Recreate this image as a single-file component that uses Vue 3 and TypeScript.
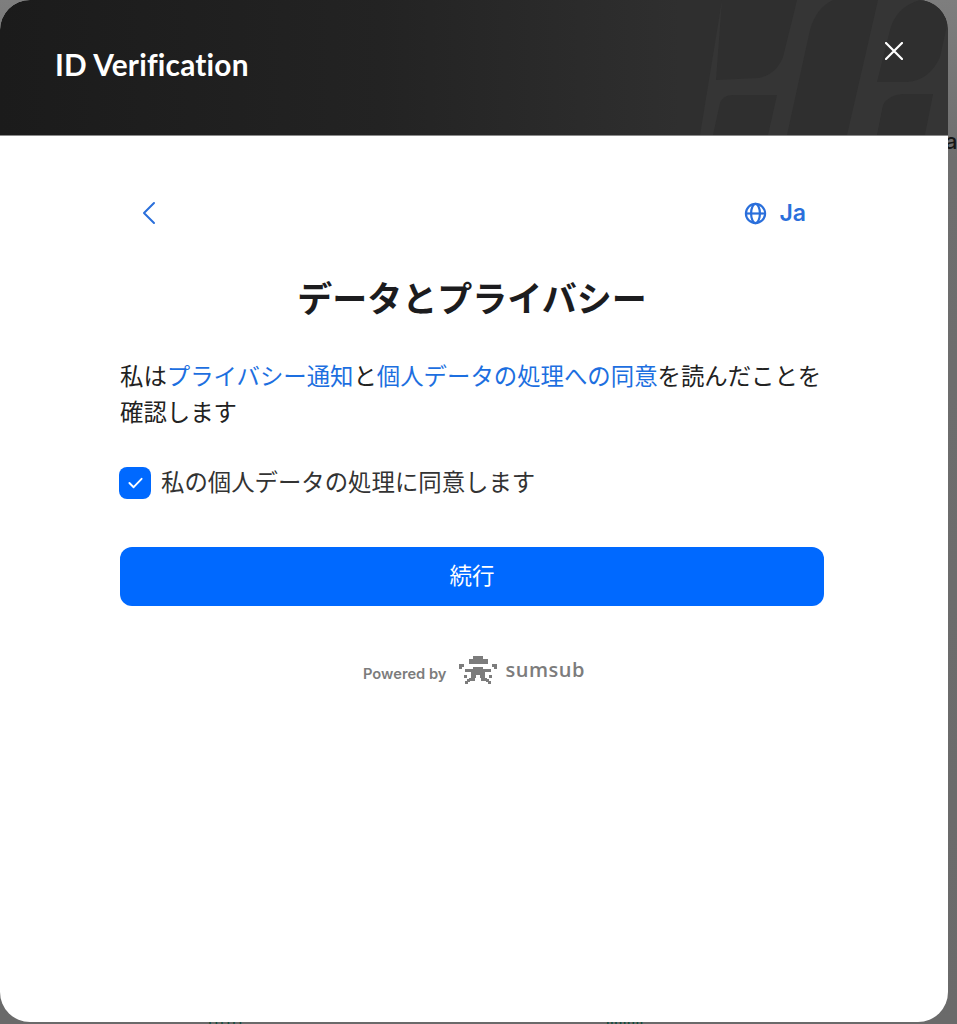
<script setup lang="ts">
const logoPixels: [number, number, number, number][] = [
  [14, 0, 10, 3], [10, 3, 19, 5],
  [0, 8, 5, 3], [0, 11, 3, 2], [33, 8, 5, 3], [35, 11, 3, 2],
  [6, 13, 8, 3], [24, 13, 8, 3],
  [14, 11, 10, 4], [12, 15, 14, 4],
  [12, 19, 5, 3], [21, 19, 5, 3], [10, 22, 6, 3], [22, 22, 6, 3],
  [5, 19, 3, 3], [8, 23, 3, 3], [27, 23, 3, 3], [30, 19, 3, 3], [6, 25, 3, 3], [29, 25, 3, 3],
]
</script>

<template>
  <div class="page">
    <span class="bg-text side">a</span>
    <span class="bg-text foot-a">ԱԱԱ</span>
    <span class="bg-text foot-b">шшш</span>
    <div class="modal">
      <header class="header">
        <svg class="pattern" viewBox="0 0 260 135" width="260" height="135" aria-hidden="true">
          <path d="M12 135 L34 0 H260 V135 Z" fill="#353535" />
          <g fill="#2f2f2f">
            <path d="M34 0 H109 L95 57 Q88 75 70 78 L28 80 Z" />
            <path d="M25 135 L32 103 Q35 95 45 95 H89 L80 135 Z" />
            <path d="M145 0 H190 L159 135 H99 L122 30 Q128 8 145 0 Z" />
            <path d="M232 0 H242 Q259 10 259 25 L252 57 Q242 80 219 82 H189 L202 30 Q208 7 232 0 Z" />
            <path d="M189 135 L195 105 Q200 95 215 94 H245 L237 135 Z" />
          </g>
        </svg>
        <h1 class="header-title">ID Verification</h1>
        <button class="close" aria-label="Close">
          <svg viewBox="0 0 18 18" width="18" height="18">
            <path d="M1 1 L17 17 M17 1 L1 17" stroke="#fff" stroke-width="2.2" stroke-linecap="round" />
          </svg>
        </button>
      </header>

      <main class="content">
        <div class="toolbar">
          <button class="back" aria-label="Back">
            <svg viewBox="0 0 14 24" width="14" height="24">
              <path d="M12 2 L2 12 L12 22" fill="none" stroke="#2a6fdb" stroke-width="2" stroke-linecap="round" stroke-linejoin="round" />
            </svg>
          </button>
          <div class="lang">
            <svg viewBox="0 0 24 24" width="23" height="23">
              <g fill="none" stroke="#2a6fdb" stroke-width="2.3">
                <circle cx="12" cy="12" r="10" />
                <ellipse cx="12" cy="12" rx="4.6" ry="10" />
                <path d="M2 12 H22" />
              </g>
            </svg>
            <span>Ja</span>
          </div>
        </div>

        <h2 class="title">データとプライバシー</h2>

        <p class="body-text">
          私は<a class="link">プライバシー通知</a>と<a class="link">個人データの処理への同意</a>を読んだことを確認します
        </p>

        <label class="check-row">
          <span class="checkbox">
            <svg viewBox="0 0 16 12" width="15" height="12">
              <path d="M1.5 6 L6 10.5 L14.5 1.5" fill="none" stroke="#fff" stroke-width="2" stroke-linecap="round" stroke-linejoin="round" />
            </svg>
          </span>
          <span>私の個人データの処理に同意します</span>
        </label>

        <button class="primary">続行</button>

        <div class="powered">
          <span class="powered-by">Powered by</span>
          <svg class="logo" viewBox="0 0 38 28" width="38" height="28" aria-hidden="true">
            <rect v-for="(p, i) in logoPixels" :key="i" :x="p[0]" :y="p[1]" :width="p[2]" :height="p[3]" fill="#7c7c7c" />
          </svg>
          <span class="brand">sumsub</span>
        </div>
      </main>
    </div>
  </div>
</template>

<style>
html, body { margin: 0; background: #6e6e6e; }
</style>

<style scoped>
.page {
  position: relative;
  width: 957px;
  height: 1024px;
  overflow: hidden;
  background: linear-gradient(180deg, #7e7e7e 0, #6e6e6e 160px, #6a6a6a 100%);
  font-family: "Inter", "Noto Sans CJK JP", sans-serif;
  color: #1c1c1e;
}
.bg-text {
  position: absolute;
  font-family: "Inter", sans-serif;
  font-weight: 500;
}
.side { left: 945px; top: 128px; font-size: 22px; color: #161616; }
.foot-a { left: 208px; top: 1016px; font-size: 14px; color: #0e4a38; letter-spacing: 1px; }
.foot-b { left: 606px; top: 1016px; font-size: 14px; color: #0e4a38; letter-spacing: 1px; }
.modal {
  position: relative;
  width: 948px;
  height: 1022px;
  border-radius: 30px;
  background: #fff;
  overflow: hidden;
}
.header {
  position: relative;
  height: 136px;
  box-sizing: border-box;
  padding: 0 45px 0 55px;
  display: flex;
  align-items: center;
  justify-content: space-between;
  background: linear-gradient(90deg, #1b1b1b 0, #232323 380px, #2f2f2f 680px, #2f2f2f 100%);
  border-bottom: 1px solid #8a8a8a;
}
.pattern { position: absolute; right: 0; top: 0; }
.header-title {
  position: relative;
  top: -3px;
  margin: 0;
  font-family: "Lato", sans-serif;
  font-size: 29.8px;
  font-weight: 700;
  color: #fff;
  letter-spacing: 0.2px;
}
.close {
  position: relative;
  top: -17px;
  padding: 0;
  border: 0;
  background: none;
  display: flex;
}
.content {
  width: 704px;
  margin-left: 120px;
  display: flex;
  flex-direction: column;
}
.toolbar {
  margin-top: 64px;
  height: 26px;
  padding: 0 18px 0 22px;
  display: flex;
  align-items: center;
  justify-content: space-between;
}
.back { padding: 0; border: 0; background: none; display: flex; }
.lang {
  display: flex;
  align-items: center;
  gap: 12px;
  font-size: 23px;
  font-weight: 600;
  color: #2a6fdb;
}
.title {
  margin: 49px 0 0;
  text-align: center;
  font-size: 35px;
  line-height: 48px;
  font-weight: 700;
  color: #1c1c1e;
}
.body-text {
  margin: 36px 0 0;
  font-size: 23.4px;
  line-height: 36px;
  color: #222;
}
.link { color: #1d6fe0; }
.check-row {
  margin: 36px 0 0 -1px;
  display: flex;
  align-items: center;
  gap: 10px;
  font-size: 23.4px;
  line-height: 32px;
  color: #333;
}
.checkbox {
  width: 32px;
  height: 32px;
  border-radius: 8px;
  background: #0069ff;
  display: flex;
  align-items: center;
  justify-content: center;
}
.primary {
  margin-top: 48px;
  height: 59px;
  padding: 0 0 5px;
  border: 0;
  border-radius: 12px;
  background: #0069ff;
  color: #fff;
  font-family: inherit;
  font-size: 22.5px;
}
.powered {
  margin-top: 49px;
  margin-left: 243px;
  display: flex;
  align-items: center;
  color: #7c7c7c;
}
.powered-by { font-size: 14.7px; font-weight: 600; margin-top: 8px; }
.logo { margin-left: 13px; }
.brand {
  margin-left: 8px;
  margin-top: 1px;
  font-family: "Open Sans", sans-serif;
  font-size: 20px;
  font-weight: 600;
  letter-spacing: 0.5px;
  line-height: 28px;
}
</style>
